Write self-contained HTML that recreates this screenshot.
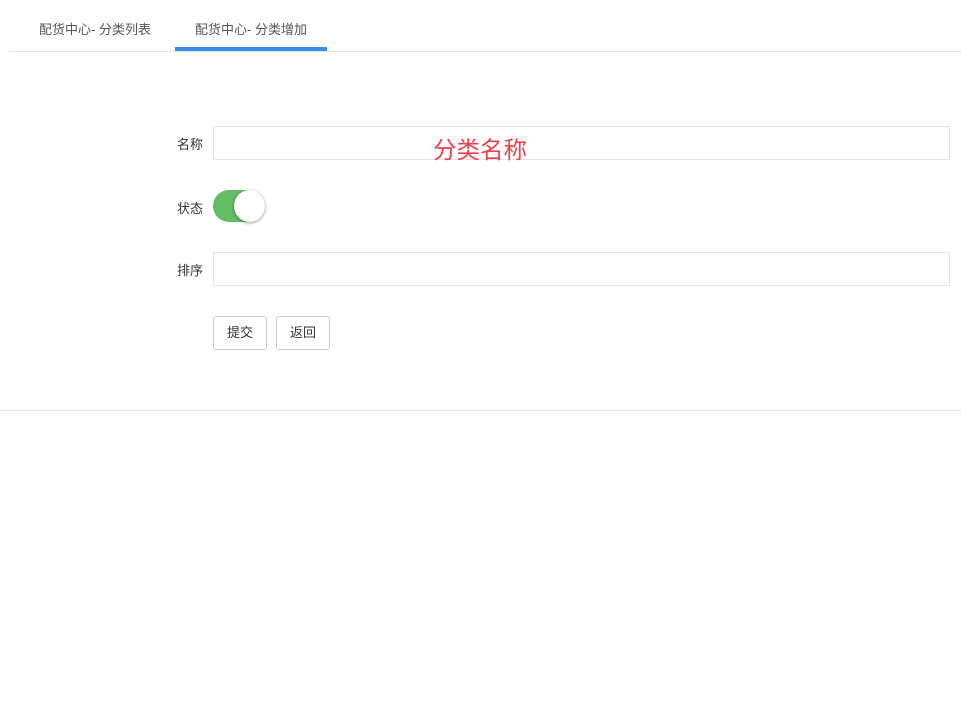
<!DOCTYPE html>
<html><head><meta charset="utf-8"><style>
*{box-sizing:border-box;margin:0;padding:0}
body{width:961px;height:726px;background:#fff;font-family:"Liberation Sans","Noto Sans CJK SC",sans-serif;font-size:13px;color:#333;position:relative;overflow:hidden}
.tabs{position:absolute;left:9px;right:0;top:0;height:52px;border-bottom:1px solid #e5e5e5}
.tab{position:absolute;top:19px;font-size:13px;color:#555}
.ul{position:absolute;left:175px;width:152px;top:47px;height:4px;background:#3a8ee6}
.lbl{position:absolute;left:177px;font-size:13px;color:#333}
.inp{position:absolute;left:213px;width:737px;height:34px;border:1px solid #e5e5e5}
.ph{position:absolute;left:433px;top:131px;font-size:23.5px;color:#f0404a}
.tg{position:absolute;left:213px;top:190px;width:52px;height:32px;border-radius:16px;background:#64bd63}
.kn{position:absolute;left:234px;top:190px;width:31px;height:32px;border-radius:50%;background:#fff;box-shadow:0 1px 3px rgba(0,0,0,.4)}
.btn{position:absolute;top:316px;width:54px;height:34px;border:1px solid #ccc;border-radius:3px;font-size:13px;color:#333;text-align:center;line-height:32px}
.bot{position:absolute;left:0;right:0;top:410px;border-top:1px solid #e5e5e5}
</style></head><body>
<div class="tabs"></div>
<div class="tab" style="left:39px">配货中心- 分类列表</div>
<div class="tab" style="left:195px">配货中心- 分类增加</div>
<div class="ul"></div>
<div class="lbl" style="top:134px">名称</div>
<div class="inp" style="top:126px"></div>
<div class="ph">分类名称</div>
<div class="lbl" style="top:198px">状态</div>
<div class="tg"></div><div class="kn"></div>
<div class="lbl" style="top:260px">排序</div>
<div class="inp" style="top:252px"></div>
<div class="btn" style="left:213px">提交</div>
<div class="btn" style="left:276px">返回</div>
<div class="bot"></div>
</body></html>
